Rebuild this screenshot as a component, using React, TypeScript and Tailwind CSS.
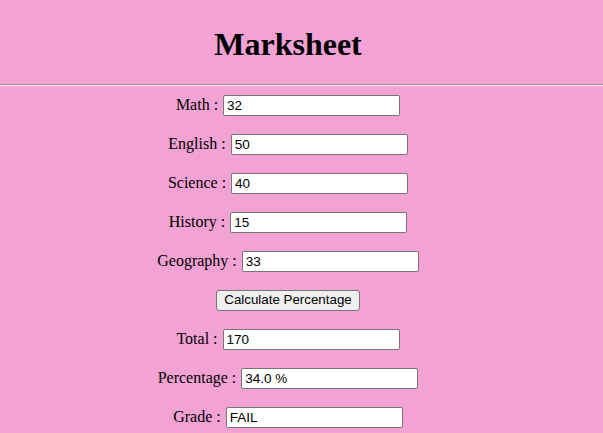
import { useState } from "react";

const subjects = [
    { label: "Math", value: "32" },
    { label: "English", value: "50" },
    { label: "Science", value: "40" },
    { label: "History", value: "15" },
    { label: "Geography", value: "33" },
];

function Row({ label, value, onChange }: { label: string; value: string; onChange?: (v: string) => void }) {
    return (
        <div className="flex h-[22px] items-center justify-center">
            <label className="whitespace-pre text-[16px] leading-[22px] text-black">{label} : </label>
            <input
                type="text"
                value={value}
                onChange={(e) => onChange && onChange(e.target.value)}
                readOnly={!onChange}
                className="ml-[1px] h-[21px] w-[177px] rounded-[2px] border border-[#767676] bg-white px-[3px] font-['Liberation_Sans',Arial,sans-serif] text-[13.5px] text-black outline-none"
            />
        </div>
    );
}

export default function App() {
    const [marks, setMarks] = useState(subjects.map((s) => s.value));
    const [result, setResult] = useState({ total: "170", percentage: "34.0 %", grade: "FAIL" });

    const calculate = () => {
        const total = marks.reduce((a, m) => a + (parseFloat(m) || 0), 0);
        const pct = total / marks.length;
        setResult({
            total: String(total),
            percentage: pct.toFixed(1) + " %",
            grade: pct >= 40 ? "PASS" : "FAIL",
        });
    };

    return (
        <div className="min-h-[433px] w-full bg-[#f3a2d4] font-['Liberation_Serif','Times_New_Roman',serif] text-black">
            <div className="w-[576px] pt-[26px]">
                <h1 className="text-center text-[32px] leading-[37px] font-bold">Marksheet</h1>
            </div>
            <div className="mt-[21px] h-[2px] w-full border-t border-b border-t-[#9a8a94] border-b-[#fbe6f2]" />
            <div className="mt-[8px] flex w-[576px] flex-col gap-[17px]">
                {subjects.map((s, i) => (
                    <Row
                        key={s.label}
                        label={s.label}
                        value={marks[i]}
                        onChange={(v) => setMarks(marks.map((m, j) => (j === i ? v : m)))}
                    />
                ))}
                <div className="flex h-[22px] items-center justify-center">
                    <button
                        onClick={calculate}
                        className="h-[21px] rounded-[3px] border border-[#767676] bg-[#efefef] px-[7px] font-['Liberation_Sans',Arial,sans-serif] text-[13.33px] leading-none text-black"
                    >
                        Calculate Percentage
                    </button>
                </div>
                <Row label="Total" value={result.total} />
                <Row label="Percentage" value={result.percentage} />
                <Row label="Grade" value={result.grade} />
            </div>
        </div>
    );
}
